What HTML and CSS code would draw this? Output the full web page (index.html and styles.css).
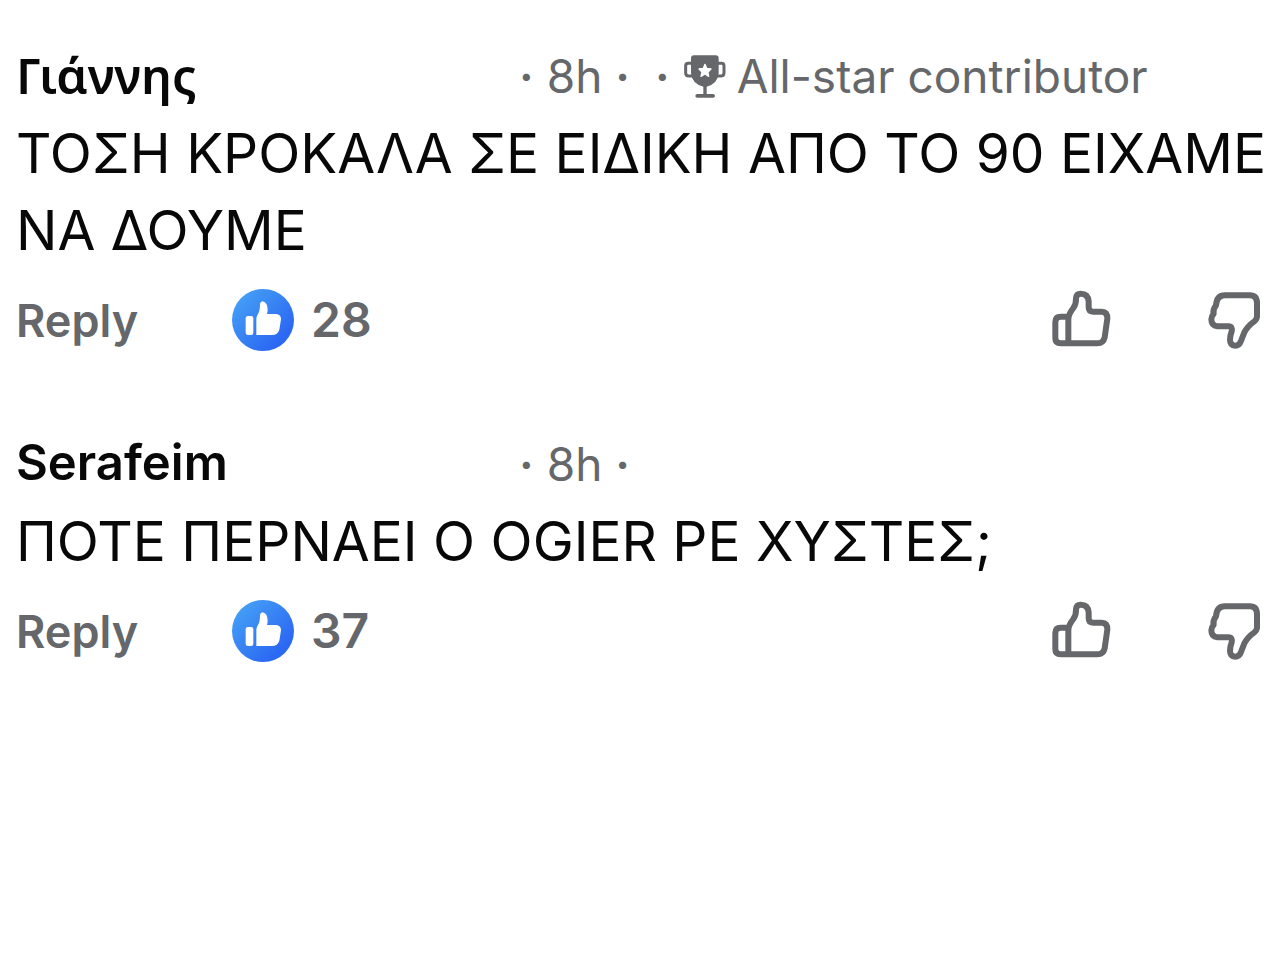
FILE: index.html
```
<!DOCTYPE html>
<html lang="el">
<head>
  <meta charset="UTF-8">
  <title>Comments</title>
  <link rel="stylesheet" href="styles.css">
</head>
<body>
  <!-- shared icons -->
  <svg class="sprite" aria-hidden="true">
    <defs>
      <linearGradient id="like-fill" x1="0" y1="0" x2="1" y2="1">
        <stop offset="0.1" stop-color="#45a0f5"/>
        <stop offset="0.8" stop-color="#2b68f3"/>
      </linearGradient>
    </defs>
    <symbol id="icon-liked" viewBox="0 0 186 186">
      <circle cx="93" cy="93" r="93" fill="url(#like-fill)"/>
      <rect x="41" y="81" width="23" height="57" rx="7" fill="#fff"/>
      <path fill="#fff" d="M73 138V89Q73 82 78 75Q84 66 84 45Q85 37 92 37Q107 41 107 62Q107 69 105 75H132Q147 76 147 91L142 122Q137 138 120 138Z"/>
    </symbol>
    <symbol id="icon-up" viewBox="0 0 180 180">
      <path class="line" d="M52 80H29Q13 80 13 96V144Q13 160 29 160H139Q157 160 161 142L169 86Q170 66 152 65H126Q113 65 113 52V34Q111 11 89 11Q76 11 75 25Q76 41 67 54Q52 73 52 88V160"/>
    </symbol>
    <symbol id="icon-down" viewBox="0 0 180 180">
      <path class="line" d="M54 16H128Q150 16 150 40V79Q150 88 142 94Q122 108 112 127L102 153Q97 167 85 167Q69 166 69 149Q69 137 74 124Q77 109 65 109H31Q13 107 13 88Q13 79 20 71Q17 58 27 46Q29 16 54 16Z"/>
    </symbol>
    <symbol id="icon-trophy" viewBox="0 0 132 132">
      <path fill="none" stroke="currentColor" stroke-width="9" d="M28 28H16Q8 28 8 36V56Q8 66 18 66H29M103 28H115Q123 28 123 36V56Q123 66 113 66H102"/>
      <path fill="currentColor" d="M33 4H98Q107 4 107 13V58Q104 90 71 98V120H90Q96 120 96 126Q96 131 90 131H43Q37 131 37 126Q37 120 43 120H61V98Q27 90 24 58V13Q24 4 33 4Z"/>
      <path fill="#fff" stroke="#fff" stroke-width="4" stroke-linejoin="round" d="M66 31L71 43L84 45L75 54L77 67L66 60L54 67L57 54L48 45L61 43Z"/>
    </symbol>
  </svg>

  <main class="comments">
    <article class="comment">
      <header class="comment-header">
        <h2 class="author author-greek">Γιάννης</h2>
        <div class="meta">
          <span class="dot">·</span>
          <time>8h</time>
          <span class="dot">·</span>
          <span class="dot badge-dot">·</span>
          <span class="badge">
            <svg class="trophy" aria-hidden="true"><use href="#icon-trophy"/></svg>
            All-star contributor
          </span>
        </div>
      </header>
      <p class="comment-text">ΤΟΣΗ ΚΡΟΚΑΛΑ ΣΕ ΕΙΔΙΚΗ ΑΠΟ ΤΟ 90 ΕΙΧΑΜΕ ΝΑ ΔΟΥΜΕ</p>
      <footer class="actions">
        <button class="reply" type="button">Reply</button>
        <button class="reactions" type="button">
          <svg class="liked" aria-hidden="true"><use href="#icon-liked"/></svg>
          28
        </button>
        <div class="votes">
          <button class="vote" type="button" aria-label="Like"><svg><use href="#icon-up"/></svg></button>
          <button class="vote" type="button" aria-label="Dislike"><svg><use href="#icon-down"/></svg></button>
        </div>
      </footer>
    </article>

    <article class="comment">
      <header class="comment-header">
        <h2 class="author">Serafeim</h2>
        <div class="meta">
          <span class="dot">·</span>
          <time>8h</time>
          <span class="dot">·</span>
        </div>
      </header>
      <p class="comment-text">ΠΟΤΕ ΠΕΡΝΑΕΙ Ο OGIER ΡΕ ΧΥΣΤΕΣ;</p>
      <footer class="actions">
        <button class="reply" type="button">Reply</button>
        <button class="reactions" type="button">
          <svg class="liked" aria-hidden="true"><use href="#icon-liked"/></svg>
          37
        </button>
        <div class="votes">
          <button class="vote" type="button" aria-label="Like"><svg><use href="#icon-up"/></svg></button>
          <button class="vote" type="button" aria-label="Dislike"><svg><use href="#icon-down"/></svg></button>
        </div>
      </footer>
    </article>
  </main>
</body>
</html>
```

FILE: styles.css
```
* {
  box-sizing: border-box;
}

body {
  margin: 0;
  background: #fff;
  color: #080809;
  font-family: Inter, "Noto Sans", sans-serif;
}

.sprite {
  display: block;
  width: 0;
  height: 0;
}

.comments {
  display: flex;
  flex-direction: column;
  gap: 83px;
  padding: 46px 12px 46px 16px;
}

.comment-header {
  display: flex;
  align-items: center;
  height: 58px;
}

.author {
  flex: 0 0 503px;
  margin: 0;
  font-size: 49px;
  font-weight: 600;
  line-height: 58px;
}

.author-greek {
  font-family: "Noto Sans", sans-serif;
}

.meta {
  display: flex;
  align-items: center;
  gap: 13px;
  padding-top: 2px;
  color: #65676a;
  font-size: 46px;
  line-height: 58px;
  white-space: nowrap;
}

.dot {
  font-weight: 600;
}

.badge-dot {
  margin-left: 12px;
}

.badge {
  display: flex;
  align-items: center;
  gap: 10px;
}

.trophy {
  width: 44px;
  height: 44px;
}

.comment-text {
  margin: 11px 0 20px;
  font-size: 55px;
  line-height: 77px;
}

.actions {
  display: flex;
  align-items: center;
  height: 62px;
  padding-right: 5px;
}

button {
  padding: 0;
  border: none;
  background: none;
  color: #65676a;
  font-family: inherit;
  font-size: 45px;
  font-weight: 600;
  line-height: 62px;
  cursor: pointer;
}

.reply {
  width: 216px;
  padding-top: 2px;
  text-align: left;
}

.reactions {
  display: flex;
  align-items: center;
  gap: 17px;
  font-size: 48px;
}

.liked {
  width: 62px;
  height: 62px;
}

.votes {
  display: flex;
  gap: 96px;
  margin-left: auto;
}

.vote,
.vote svg {
  display: block;
  width: 60px;
  height: 60px;
}

.line {
  fill: none;
  stroke: currentColor;
  stroke-width: 18;
  stroke-linejoin: round;
}
```
